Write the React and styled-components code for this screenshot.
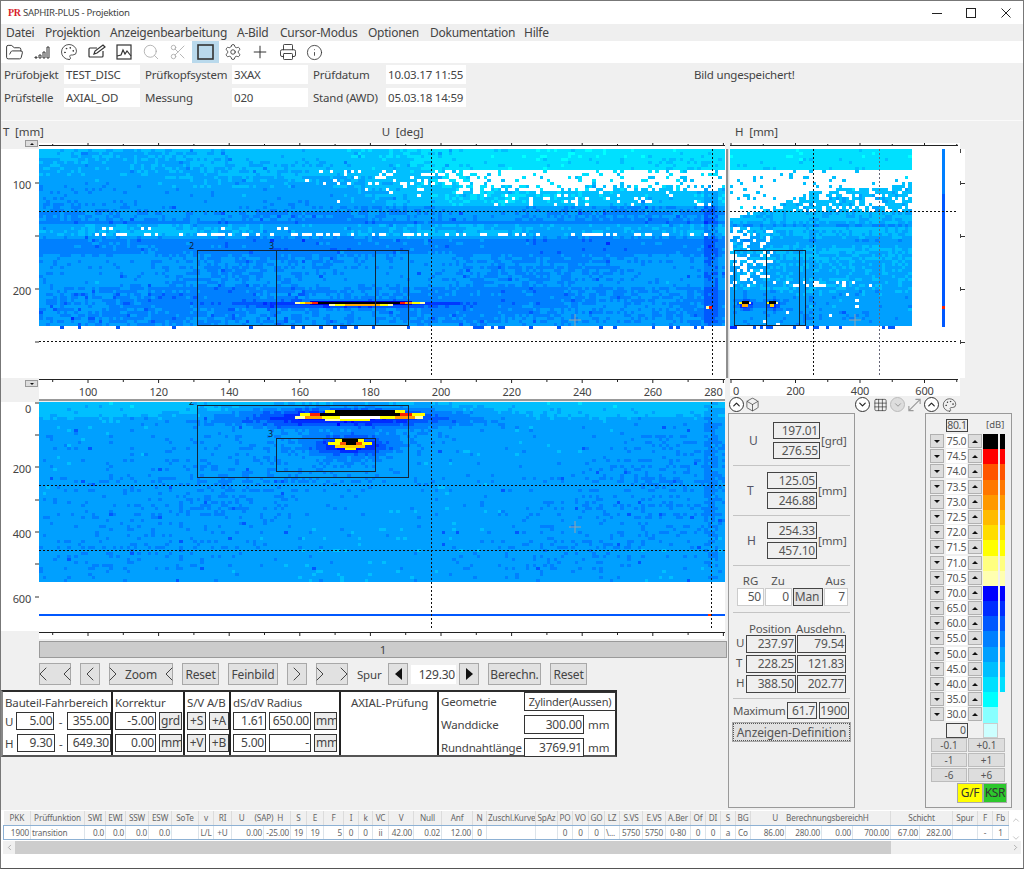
import React from 'react';
import styled, { createGlobalStyle } from 'styled-components';
import { FolderOpen, Palette, Search, Scissors, Settings, Plus, Printer, Info, Box, Grid3x3, ChevronLeft, ChevronRight, ChevronUp, ChevronDown } from 'lucide-react';

/* ---------- heat map data ---------- */
function rng(seed) {
  let a = seed >>> 0;
  return () => {
    a = (a + 0x6d2b79f5) >>> 0;
    let t = a;
    t = Math.imul(t ^ (t >>> 15), t | 1);
    t ^= t + Math.imul(t ^ (t >>> 7), t | 61);
    return ((t ^ (t >>> 14)) >>> 0) / 4294967296;
  };
}
const smooth = (a, b, x) => {
  const t = Math.min(1, Math.max(0, (x - a) / (b - a)));
  return t * t * (3 - 2 * t);
};
const lerpTable = (tbl, y) => {
  for (let i = 1; i < tbl.length; i++) {
    if (y <= tbl[i][0]) {
      const [y0, v0] = tbl[i - 1];
      const [y1, v1] = tbl[i];
      return v0 + ((v1 - v0) * (y - y0)) / (y1 - y0);
    }
  }
  return tbl[tbl.length - 1][1];
};
const colorOf = (v) => {
  if (v < 30) return null;
  if (v < 35) return '#88ffff';
  if (v < 40) return '#00ffff';
  if (v < 45) return '#00e0ff';
  if (v < 50) return '#00bfff';
  if (v < 55) return '#00a0ff';
  if (v < 60) return '#0080ff';
  if (v < 65) return '#0058ff';
  if (v < 70) return '#002cff';
  return '#0000ff';
};
function buildHeat(x0, y0, w, h, cw, ch, fn, seed) {
  const r = rng(seed);
  const paths = {};
  const rows = Math.ceil(h / ch);
  const cols = Math.ceil(w / cw);
  for (let j = 0; j < rows; j++) {
    const y = y0 + j * ch;
    const rowOff = (r() - 0.5) * 1.4;
    let runColor = null;
    let runStart = 0;
    const flush = (endX) => {
      if (runColor) {
        paths[runColor] = (paths[runColor] || '') + `M${runStart} ${y}h${endX - runStart}v${ch}h${runStart - endX}z`;
      }
    };
    for (let i = 0; i <= cols; i++) {
      const x = x0 + Math.round(i * cw);
      let c = null;
      if (i < cols) {
        const n = (r() + r() + r() - 1.5) * 2.4;
        const v = fn(x, y, r);
        c = v === null ? null : colorOf(v + rowOff + n);
      }
      if (c !== runColor) {
        flush(x);
        runColor = c;
        runStart = x;
      }
    }
  }
  return Object.entries(paths);
}

const topBand = [[150,49],[165,50],[185,52],[205,54],[221,55],[223,59],[225,50.5],[236,50.5],[238,57],[254,57],[256,54],[284,54],[287,56],[300,56],[325,54.5]];
const topFn = (x, y, r) => {
  if (y >= 329) return null;
  if (y >= 325) return r() < 0.88 ? null : 63;
  let v = lerpTable(topBand, y);
  const f = smooth(270, 470, x);
  if (y < 205) v -= 7 * f;
  const whiteness = 0.22 * smooth(285, 400, x) + 0.6 * smooth(400, 500, x);
  if (y >= 171 && y < 184 && r() < whiteness) return null;
  if (y >= 184 && y < 192 && r() < whiteness * 0.75) return null;
  if (y >= 192 && y < 205 && r() < whiteness * 0.12) return null;
  if (y >= 228 && y < 231 && x > 95 && x < 300 && r() < 0.14) return null;
  if (y >= 234 && y < 237 && x > 85 && r() < 0.38) return null;
  if (r() < 0.02) v += 6;
  v += Math.sin(x / 47 + y / 30) * 1.0;
  if (x > 702 && x < 716 && y > 175) v += 6;
  const dx = (x - 345) / 100;
  const dy = (y - 304) / 3;
  v += 17 * Math.exp(-dx * dx - dy * dy);
  if (y > 290 && x < 300 && r() < 0.06) v += 6;
  return v;
};
const bottomBand = [[403,48],[415,49.5],[422,52.5],[440,53.5],[500,53.5],[583,52.5]];
const bottomFn = (x, y, r) => {
  if (y >= 583) return null;
  let v = lerpTable(bottomBand, y);
  if (r() < 0.008) v += 7;
  v += Math.sin(x / 70 + y / 45) * 0.8;
  const a = (x - 345) / 105;
  const b = (y - 416) / 9;
  v += 22 * Math.exp(-a * a - b * b);
  const c = (x - 350) / 34;
  const d = (y - 445) / 9;
  v += 20 * Math.exp(-c * c - d * d);
  if (x > 702 && x < 716) v += 2;
  return v;
};
const rightBand = [[150,42.5],[168,43],[172,47],[205,49],[212,49.5],[222,50],[224,56],[228,49],[238,50],[241,55],[245,50],[285,50.5],[300,52],[325,53.5]];
const rightFn = (x, y, r) => {
  if (x >= 910 || y >= 329) return null;
  if (y >= 325) return r() < 0.7 ? null : 63;
  if (y >= 170 && y < 177) return r() < 0.96 ? null : 47;
  const edge = 211 - 28 * smooth(760, 860, x) + 6 * Math.sin(x / 22);
  if (y >= 177 && y < edge) return r() < 0.88 ? null : 47;
  if (y >= edge && y < 212 && r() < 0.3) return null;
  if (y >= 226 && y < 286 && x < 772 && r() < (x < 750 ? 0.45 : 0.22)) return null;
  if (y >= 282 && y < 287 && x > 770 && x < 870 && r() < 0.4) return null;
  if (y > 286 && r() < 0.012) return null;
  let v = lerpTable(rightBand, y);
  if (y > 290 && r() < 0.05) v += 5;
  const a = (x - 744) / 8;
  const b = (y - 304) / 5;
  const c = (x - 771) / 8;
  v += 18 * Math.exp(-a * a - b * b) + 18 * Math.exp(-c * c - b * b);
  return v;
};

const TOP_HEAT = buildHeat(39, 150, 686, 175 + 5, 3.5, 3, topFn, 11);
const BOTTOM_HEAT = buildHeat(39, 403, 686, 180, 3.5, 3, bottomFn, 29);
const RIGHT_HEAT = buildHeat(730, 150, 180, 180, 3.3, 3, rightFn, 47);

const TOP_HOT = [
  [272,303,188,3,'#0038ff'],[310,301.5,102,4.5,'#0000d0'],
  [295,303,5,2,'#ffffaa'],[300,303,5,2,'#ffff00'],[305,303,7,2,'#ff9900'],[312,303,6,2,'#ff2000'],
  [318,303,82,2,'#000000'],[400,303,5,2,'#ff1000'],[405,303,7,2,'#ff9900'],[412,303,8,2,'#ffff00'],[420,303,5,2,'#ffffaa'],
  [329,305,6,2,'#ffffaa'],[335,305,10,2,'#ffff00'],[345,305,35,2,'#ffaa00'],[380,305,8,2,'#ffff00'],[388,305,5,2,'#ffffaa'],
  [706,307,3,3,'#ffffaa'],[709,307,3,3,'#ff1000'],
];
const BOTTOM_HOT = [
  [325,411,10,3,'#ffff00'],[335,411,60,3,'#000000'],[395,411,10,3,'#ffff00'],
  [300,414,10,3,'#ffff00'],[310,414,10,3,'#ff2000'],[320,414,80,3,'#000000'],[400,414,12,3,'#ff2000'],[412,414,13,3,'#ffff00'],
  [295,417,10,3,'#ffffaa'],[305,417,17,3,'#ff9900'],[322,417,18,3,'#ffff00'],[340,417,40,3,'#ffffff'],[380,417,15,3,'#ffff00'],[395,417,20,3,'#ff9900'],[415,417,8,3,'#ffffaa'],
  [325,420,15,2,'#ffffaa'],[340,420,30,2,'#ffff00'],
  [335,440,7,3,'#ffff00'],[342,440,16,3,'#000000'],[358,440,6,3,'#ffff00'],
  [328,443,12,3,'#ffff00'],[340,443,6,3,'#ff5500'],[346,443,10,3,'#000000'],[356,443,6,3,'#ff5500'],[362,443,10,3,'#ffff00'],
  [335,446,30,3,'#ffcc00'],[345,449,11,2,'#ffff00'],
  [708,615,4,2,'#ff3300'],
];
const RIGHT_HOT = [
  [739,302.5,3,2.5,'#ffff00'],[742,302,7,3,'#000000'],[749,302.5,2,2.5,'#ffffaa'],[742,305,6,2.5,'#ffaa00'],
  [766,302.5,3,2.5,'#ffff00'],[769,302,7,3,'#000000'],[776,302.5,2,2.5,'#ffffaa'],[770,305,4,2.5,'#ffcc00'],
];

/* ---------- global ---------- */
const Global = createGlobalStyle`
  html, body { margin: 0; padding: 0; background: #f0f0f0; overflow: hidden; }
  * { box-sizing: border-box; }
  body { font-family: "Noto Sans", "Open Sans", sans-serif; color: #3a3a3a; }
`;
const Window = styled.div`
  width: 1024px; height: 869px; display: flex; flex-direction: column;
  background: #f0f0f0; border: 1px solid #777; border-bottom-color: #555; overflow: hidden;
`;

/* ---------- title / menu / toolbar ---------- */
const TitleBar = styled.div`
  height: 23px; background: #fff; display: flex; align-items: center; padding-left: 7px; flex: none;
`;
const Logo = styled.span`
  font: bold 10px "Liberation Serif", serif; color: #d81e2c; width: 15px; letter-spacing: -0.3px;
`;
const TitleText = styled.span`
  font-size: 9.6px; color: #444; letter-spacing: -0.3px; flex: 1;
`;
const WinButton = styled.span`
  width: 34.5px; height: 23px; display: flex; align-items: center; justify-content: center;
`;
const MenuBar = styled.div`
  height: 17px; flex: none; display: flex; align-items: center; padding-left: 5px; background: #efefef;
`;
const MenuItem = styled.span`
  width: ${(p) => p.$w}px; font-size: 12px; color: #444; white-space: nowrap; letter-spacing: -0.25px;
`;
const Toolbar = styled.div`
  height: 22px; flex: none; display: flex; align-items: center; background: #fff;
`;
const ToolSlot = styled.span`
  width: 27.3px; height: 22px; display: flex; align-items: center; justify-content: center;
  color: ${(p) => (p.$off ? '#a8a8a8' : '#333')};
  background: ${(p) => (p.$on ? '#b9d9ec' : 'transparent')};
`;
const InfoGrid = styled.div`
  height: 58px; flex: none; padding: 2px 0 0 3px; display: grid;
  grid-template-columns: 60px 76px 5px 87px 76px 5px 73px 80px 228px auto;
  grid-auto-rows: 19px; row-gap: 4px; align-items: center;
  border-bottom: 1px solid #fafafa;
`;
const InfoLabel = styled.span`
  font-size: 11.5px; color: #444; white-space: nowrap; letter-spacing: -0.2px;
  grid-column: ${(p) => p.$col};
`;
const InfoValue = styled.span`
  font-size: 11.5px; color: #444; white-space: nowrap; background: #fff; height: 19px; padding-left: 2px;
  line-height: 19px; letter-spacing: -0.2px; grid-column: ${(p) => p.$col};
`;
const InfoNote = styled.span`
  font-size: 11.5px; color: #444; white-space: nowrap; grid-column: 10; letter-spacing: -0.2px;
`;

/* ---------- workspace ---------- */
const Workspace = styled.div`
  height: 689px; flex: none; display: flex;
`;
const LeftCol = styled.div`
  width: 724px; flex: none; display: flex; flex-direction: column;
`;
const RightCol = styled.div`
  width: 298px; flex: none; display: flex; flex-direction: column;
`;
const AxisHead = styled.div`
  height: 19px; flex: none; display: flex; align-items: center; font-size: 11.5px; color: #444;
  white-space: pre; padding: 1px 0 0 ${(p) => p.$pad}px; letter-spacing: -0.1px;
`;
const AxisGap = styled.span`
  width: ${(p) => p.$w}px;
`;
const Row = styled.div`
  display: flex; flex: none; height: ${(p) => p.$h}px;
`;
const Gutter = styled.div`
  width: 38px; flex: none; display: flex; justify-content: flex-end; align-items: flex-start;
  padding: ${(p) => p.$pt || 0}px 1px 0 0;
`;
const MiniButton = styled.span`
  width: 13px; height: 7px; background: #ddd; border: 1px solid #999; display: flex; align-items: center; justify-content: center;
  &::after {
    content: ''; width: 0; height: 0; border-left: 2px solid transparent; border-right: 2px solid transparent;
    ${(p) => (p.$down ? 'border-top: 2px solid #111;' : 'border-bottom: 2px solid #111;')}
  }
`;
const ChartSvg = styled.svg`
  display: block; flex: none; background: ${(p) => p.$bg || '#fff'};
`;
const AxisText = styled.text`
  font-family: "Noto Sans", sans-serif; font-size: 11px; fill: #444; letter-spacing: -0.2px;
`;
const BoxLabel = styled.text`
  font-family: "Noto Sans", sans-serif; font-size: 9px; fill: #123;
`;
const Divider = styled.div`
  height: 2px; margin-left: 38px; flex: none; background: #999; margin-bottom: 1px;
`;
const Splitter = styled.div`
  width: 5px; flex: none; background: linear-gradient(90deg,#fff 0,#fff 1px,#8f8f8f 1px,#8f8f8f 3px,#d0d0d0 3px,#fff 5px);
`;

/* track bar + buttons */
const TrackBar = styled.div`
  height: 17px; width: 688px; margin: 2px 0 0 38px; flex: none; background: #ccc; border: 1px solid #9a9a9a;
  display: flex; align-items: center; justify-content: center; font-size: 11.5px; color: #444;
  position: relative; z-index: 1;
`;
const NavRow = styled.div`
  height: 22px; margin: 5px 0 0 38px; flex: none; display: flex; gap: 9px; align-items: stretch;
`;
const NavButton = styled.button`
  width: ${(p) => p.$w}px; padding: 0; margin: 0; background: #e1e1e1; border: 1px solid #a8a8a8; color: #444;
  font: 12px "Noto Sans", sans-serif; letter-spacing: -0.2px; display: flex; align-items: center; justify-content: center;
  gap: ${(p) => p.$gap || 0}px; flex: none; white-space: nowrap;
  & > svg { flex: none; }
`;
const SpurLabel = styled.span`
  width: 22px; font-size: 11.5px; color: #444; align-self: center; white-space: nowrap; letter-spacing: -0.2px;
`;
const SpinGroup = styled.div`
  display: flex; gap: 3px;
`;
const SpinValue = styled.span`
  width: 45px; height: 19px; margin-top: 2px; background: #fff; font-size: 12px; text-align: right; padding-right: 1px; line-height: 19px; color: #444; letter-spacing: -0.2px;
`;
const Triangle = styled.span`
  width: 0; height: 0; border-top: 6px solid transparent; border-bottom: 6px solid transparent;
  ${(p) => (p.$right ? 'border-left: 7px solid #111;' : 'border-right: 7px solid #111;')}
`;

/* bottom panel */
const ParamPanel = styled.div`
  width: 616px; height: 67px; margin: 5px 0 0 0; flex: none; display: flex; background: #fff;
  border: 2px solid #2c2c2c; border-bottom-color: #555; border-left-color: #888;
`;
const ParamSection = styled.div`
  width: ${(p) => p.$w}px; flex: none; border-right: 2px solid #222; padding-left: 2px; display: flex; flex-direction: column;
  &:last-child { border-right: none; }
`;
const ParamTitle = styled.div`
  height: 20px; font-size: 11.5px; line-height: 22px; color: #444; white-space: nowrap; letter-spacing: -0.15px; padding-left: ${(p) => p.$pad || 0}px;
`;
const ParamRow = styled.div`
  display: flex; align-items: center; height: 18px; margin-bottom: 4px; gap: ${(p) => p.$gap || 3}px;
`;
const RowLetter = styled.span`
  font-size: 11.5px; color: #444; width: 12px;
`;
const Dash = styled.span`
  width: 12px; text-align: center; font-size: 11.5px; color: #444;
`;
const Field = styled.span`
  width: ${(p) => p.$w}px; height: ${(p) => p.$h || 18}px; flex: none; border: 1px solid #333; background: ${(p) => (p.$gray ? '#ececec' : '#fff')};
  font-size: ${(p) => p.$fs || 12}px; line-height: ${(p) => (p.$h || 18) - 2}px; text-align: ${(p) => p.$align || 'right'}; padding: 0 1px; color: #444; white-space: nowrap; overflow: hidden; letter-spacing: -0.2px;
`;
const GeoRow = styled.div`
  display: flex; align-items: center; height: 19px; margin-bottom: 4px;
`;
const GeoLabel = styled.span`
  width: 83px; font-size: 11.5px; color: #444; letter-spacing: -0.2px; white-space: nowrap; flex: none;
`;
const Unit = styled.span`
  font-size: 11.5px; color: #444; margin-left: 4px;
`;

/* right hand */
const RightAxisWrap = styled.div`
  margin-left: 5px; height: 18px; flex: none;
`;
const IconStrip = styled.div`
  height: 17px; margin-left: 4px; flex: none; display: flex; align-items: center; position: relative;
`;
const CircleBtn = styled.span`
  width: 15px; height: 15px; border-radius: 50%; flex: none; border: 1.5px solid ${(p) => (p.$off ? '#bbb' : '#333')};
  background: ${(p) => (p.$off ? '#ddd' : '#fff')}; color: ${(p) => (p.$off ? '#999' : '#222')};
  display: flex; align-items: center; justify-content: center; margin-left: ${(p) => p.$ml || 0}px;
`;
const StripIcon = styled.span`
  width: 15px; height: 15px; display: flex; align-items: center; justify-content: center; flex: none; margin-left: ${(p) => p.$ml || 0}px; color: ${(p) => p.$c || '#333'};
`;
const PanelRow = styled.div`
  display: flex; margin-left: 3px; flex: none; height: 395px;
`;
const SidePanel = styled.div`
  width: ${(p) => p.$w}px; height: 395px; flex: none; border: 1px solid #999; display: flex; flex-direction: column;
  margin-left: ${(p) => p.$ml || 0}px; padding-top: 8px;
`;
const CoordBlock = styled.div`
  display: flex; align-items: center; height: 37px; flex: none; padding-left: ${(p) => p.$pl}px;
`;
const CoordLabel = styled.span`
  width: ${(p) => p.$w}px; font-size: 12px; color: #556; flex: none;
`;
const CoordStack = styled.div`
  display: flex; flex-direction: column; gap: 3px; flex: none;
`;
const ReadBox = styled.span`
  width: ${(p) => p.$w}px; height: ${(p) => p.$h || 17}px; flex: none; border: 1px solid #444; background: #efefef; font-size: 12px; color: #555;
  line-height: ${(p) => (p.$h || 17) - 2}px; text-align: right; padding-right: 1px; letter-spacing: -0.2px; white-space: nowrap;
`;
const CoordUnit = styled.span`
  font-size: 11.5px; color: #555; margin-left: 1px; letter-spacing: -0.1px;
`;
const Sep = styled.div`
  height: 1px; margin: ${(p) => p.$mt ?? 6}px 4px 6px 4px; background: #c4c4c4; flex: none;
`;
const GainHead = styled.div`
  height: 15px; display: flex; font-size: 11.5px; color: #555; padding-left: 8px; flex: none; line-height: 17px;
`;
const GainCell = styled.span`
  width: ${(p) => p.$w}px; text-align: ${(p) => p.$align || 'center'}; flex: none;
`;
const GainRow = styled.div`
  display: flex; height: 18px; padding-left: 8px; gap: 1px; flex: none; margin-top: 1px;
`;
const GainBox = styled.span`
  width: ${(p) => p.$w}px; flex: none; background: ${(p) => (p.$man ? '#e4e4e4' : '#fff')}; border: 1px solid ${(p) => (p.$man ? '#444' : '#ccc')};
  font-size: 12px; line-height: 16px; color: #555; text-align: ${(p) => (p.$man ? 'center' : 'right')}; padding-right: 2px; letter-spacing: -0.2px;
`;
const PosHead = styled.div`
  height: 15px; display: flex; padding-left: 20px; gap: 5px; font-size: 11.5px; color: #555; flex: none; line-height: 19px; letter-spacing: -0.2px; white-space: nowrap; margin-bottom: 1px;
`;
const PosRow = styled.div`
  height: 18px; display: flex; margin-bottom: 2px; gap: 1px; flex: none; padding-left: 7px; align-items: center;
`;
const PosLetter = styled.span`
  width: 9px; font-size: 11.5px; color: #555; flex: none; margin-bottom: 3px;
`;
const MaxRow = styled.div`
  height: 18px; display: flex; align-items: center; padding-left: 4px; flex: none; gap: 2px; margin-top: -4px;
`;
const MaxLabel = styled.span`
  width: 52px; font-size: 11.5px; color: #555; letter-spacing: -0.3px; flex: none; white-space: nowrap;
`;
const DefButton = styled.button`
  margin: 3px 0 0 3px; width: 119px; height: 20px; padding: 0; flex: none; background: #e1e1e1; border: 1px solid #a8a8a8;
  font: 12px "Noto Sans", sans-serif; color: #555; outline: 1px dotted #555; outline-offset: -2px; letter-spacing: -0.1px; white-space: nowrap;
`;

/* dB scale */
const DbHead = styled.div`
  height: 12px; margin: -3px 0 3px 20px; display: flex; flex: none;
`;
const DbMax = styled.span`
  width: 22px; height: 13px; border: 1px solid #444; background: #eee; font-size: 10.5px; line-height: 11px; text-align: center; color: #555; letter-spacing: -0.3px;
`;
const DbUnit = styled.span`
  margin-left: 18px; font-size: 9.5px; color: #555; line-height: 11px;
`;
const LevelRow = styled.div`
  display: flex; height: 15.2px; padding-left: 4px; align-items: stretch; flex: none;
`;
const SpinBtn = styled.span`
  width: 14px; height: 14px; flex: none; background: #ddd; border: 1px solid #b0b0b0; display: flex; align-items: center; justify-content: center;
  &::after {
    content: ''; width: 0; height: 0; border-left: 3.5px solid transparent; border-right: 3.5px solid transparent;
    ${(p) => (p.$up ? 'border-bottom: 3.5px solid #111;' : 'border-top: 3.5px solid #111;')}
  }
`;
const LevelValue = styled.span`
  width: 21px; height: 14px; margin: 0 1px 0 2px; flex: none; background: #fff; font-size: 10.5px; line-height: 14px; text-align: center; color: #555; letter-spacing: -0.3px;
`;
const Swatch = styled.span`
  width: 15px; margin-left: 1px; flex: none; background: ${(p) => p.$c};
`;
const Strip = styled.span`
  width: 5px; margin-left: 2px; flex: none; background: ${(p) => p.$c};
`;
const ZeroRow = styled.div`
  display: flex; margin-left: 20px; height: 15px; flex: none;
`;
const ZeroBox = styled.span`
  width: 22px; height: 15px; border: 1px solid #444; background: #f0f0f0; font-size: 10.5px; line-height: 13px; text-align: right; padding-right: 1px; color: #555;
`;
const ZeroSwatch = styled.span`
  width: 15px; height: 15px; margin-left: 15px; background: #ccffff; border: 1px solid #ccc;
`;
const StepGrid = styled.div`
  display: grid; grid-template-columns: 36px 37px; column-gap: 1px; row-gap: 1px; margin: 0 0 0 5px; flex: none;
`;
const StepButton = styled.span`
  height: 14px; background: #ddd; border: 1px solid #bcbcbc; font-size: 10px; line-height: 12px; text-align: center; color: #555;
`;
const FlagRow = styled.div`
  display: flex; margin: 1px 0 0 31px; flex: none;
`;
const Flag = styled.span`
  width: ${(p) => p.$w}px; height: 20px; background: ${(p) => p.$c}; border: 1px solid #aaa; font-size: 12px; line-height: 18px; text-align: center; color: #333; letter-spacing: -0.3px;
`;

/* table */
const Footer = styled.div`
  flex: 1; background: #fff; position: relative; padding: 1px 0 0 2px; overflow: hidden;
`;
const GridTable = styled.table`
  border-collapse: collapse; table-layout: fixed; width: 1005px; font-size: 8.2px; letter-spacing: -0.15px; color: #666;
`;
const HeadCell = styled.th`
  height: 14px; padding: 0 1px; font-weight: 400; background: #f0f0f0; border-right: 1px solid #dcdcdc; white-space: pre; overflow: hidden; text-align: center; border-bottom: 1px solid #8db1d4;
`;
const BodyCell = styled.td`
  height: 14px; padding: 0 1px; border-right: 1px solid #dde4ea; white-space: nowrap; overflow: hidden; text-align: ${(p) => p.$a}; border-bottom: 1px solid #8db1d4;
  &:first-child { border-left: 1px solid #8db1d4; }
`;
const Scrollbar = styled.div`
  display: flex; height: 13px; width: 1018px; margin-top: 1px; background: #f0f0f0; align-items: center; color: #999;
`;
const ScrollArrow = styled.span`
  width: 12px; flex: none; display: flex; align-items: center; justify-content: center;
`;
const ScrollThumb = styled.span`
  width: 876px; height: 13px; background: #cdcdcd; flex: none;
`;
const ScrollRest = styled.span`
  flex: 1;
`;
const VScroll = styled.div`
  position: absolute; left: 1008px; top: 5px; width: 13px; height: 28px; display: flex; flex-direction: column; justify-content: space-between; align-items: center; color: #bbb;
`;

/* ---------- drawing helpers ---------- */
const Heat = ({ data }) => data.map(([c, d]) => <path key={c} d={d} fill={c} shapeRendering="crispEdges" />);
const Hot = ({ data }) =>
  data.map(([x, y, w, h, f], i) => <rect key={i} x={x} y={y} width={w} height={h} fill={f} shapeRendering="crispEdges" />);
const Dash1 = ({ x1, y1, x2, y2, c = '#111' }) => (
  <line x1={x1} y1={y1} x2={x2} y2={y2} stroke={c} strokeWidth="1" strokeDasharray="2 2" shapeRendering="crispEdges" />
);
const Rect = ({ x, y, w, h }) => (
  <rect x={x} y={y} width={w} height={h} fill="none" stroke="#12263a" strokeWidth="1" shapeRendering="crispEdges" />
);
const Cross = ({ x, y }) => (
  <path d={`M${x - 6} ${y}h12M${x} ${y - 6}v12`} stroke="#9aa3aa" strokeWidth="1" fill="none" />
);

const xU = (v) => 88 + (v - 100) * 3.53 - 39;
const uVals = Array.from({ length: 20 }, (_, i) => 90 + i * 10);
const XRulerTop = () => (
  <ChartSvg width="686" height="9" $bg="transparent">
    <rect x="0" y="3" width="686" height="6" fill="#fff" />
    <path d="M0 5.5H686" stroke="#222" strokeWidth="1" />
    {uVals.map((v) => (
      <line key={v} x1={xU(v)} x2={xU(v)} y1={v % 20 === 0 ? 3 : 4} y2="5" stroke="#222" strokeWidth="1" />
    ))}
  </ChartSvg>
);
const XRulerBottom = () => (
  <ChartSvg width="686" height="21" $bg="#fff">
    <path d="M0 1.5H686" stroke="#222" strokeWidth="1" />
    {uVals.map((v) => (
      <line key={v} x1={xU(v)} x2={xU(v)} y1="1" y2={v % 20 === 0 ? 5 : 4} stroke="#222" strokeWidth="1" />
    ))}
    {uVals.filter((v) => v % 20 === 0).map((v) => (
      <AxisText key={v} x={v === 280 ? xU(v) - 10 : xU(v)} y="18" textAnchor="middle">{v}</AxisText>
    ))}
  </ChartSvg>
);
const YAxis = ({ ticks, labels }) => (
  <ChartSvg width="38" height="229">
    {ticks.map((t) => <line key={t} x1="34" x2="38" y1={t} y2={t} stroke="#333" />)}
    {labels.map(([t, s]) => <AxisText key={s} x="30" y={t + 5.5} textAnchor="end">{s}</AxisText>)}
  </ChartSvg>
);
const TopPlot = () => (
  <ChartSvg width="686" height="229" viewBox="39 150 686 229">
    <Heat data={TOP_HEAT} />
    <Hot data={TOP_HOT} />
    <Cross x={575} y={321} />
    <Dash1 x1={39} y1={212.5} x2={725} y2={212.5} />
    <Dash1 x1={39} y1={342.5} x2={725} y2={342.5} />
    <Dash1 x1={431.5} y1={150} x2={431.5} y2={377} />
    <Dash1 x1={712.5} y1={150} x2={712.5} y2={377} />
    <Rect x={197.5} y={251.5} w={211} h={75} />
    <line x1="276.5" x2="276.5" y1="251" y2="326" stroke="#12263a" />
    <line x1="375.5" x2="375.5" y1="251" y2="326" stroke="#12263a" />
    <BoxLabel x={189} y={250}>2</BoxLabel>
    <BoxLabel x={269} y={250}>3</BoxLabel>
  </ChartSvg>
);
const BottomPlot = () => (
  <ChartSvg width="686" height="229" viewBox="39 403 686 229">
    <Heat data={BOTTOM_HEAT} />
    <rect x="39" y="615" width="686" height="2" fill="#0058ff" shapeRendering="crispEdges" />
    <Hot data={BOTTOM_HOT} />
    <Cross x={575} y={528} />
    <Dash1 x1={39} y1={486.5} x2={725} y2={486.5} />
    <Dash1 x1={39} y1={551.5} x2={725} y2={551.5} />
    <Dash1 x1={431.5} y1={403} x2={431.5} y2={630} />
    <Dash1 x1={711.5} y1={403} x2={711.5} y2={630} />
    <Rect x={197.5} y={406.5} w={211} h={72} />
    <Rect x={276.5} y={439.5} w={99} h={33} />
    <BoxLabel x={189} y={406}>2</BoxLabel>
    <BoxLabel x={268} y={438}>3</BoxLabel>
  </ChartSvg>
);
const RightPlot = () => (
  <ChartSvg width="235" height="229" viewBox="730 150 235 229">
    <Heat data={RIGHT_HEAT} />
    <Hot data={RIGHT_HOT} />
    <rect x="942" y="150" width="3" height="178" fill="#0080ff" shapeRendering="crispEdges" />
    <rect x="942" y="195" width="3" height="133" fill="#0058ff" shapeRendering="crispEdges" />
    <rect x="942" y="307" width="3" height="3" fill="#ff2000" shapeRendering="crispEdges" />
    <Cross x={855} y={321} />
    <Dash1 x1={730} y1={212.5} x2={957} y2={212.5} />
    <Dash1 x1={730} y1={342.5} x2={957} y2={342.5} />
    <Dash1 x1={813.5} y1={150} x2={813.5} y2={377} />
    <Dash1 x1={879.5} y1={150} x2={879.5} y2={377} c="#667" />
    <Rect x={734.5} y={251.5} w={71} h={75} />
    <line x1="766.5" x2="766.5" y1="251" y2="326" stroke="#12263a" />
    <line x1="799.5" x2="799.5" y1="251" y2="326" stroke="#12263a" />
    {[184, 237, 290, 343].map((t) => <line key={t} x1="960" x2="965" y1={t + 0.5} y2={t + 0.5} stroke="#333" />)}
    <path d="M960.5 150V154M960.5 182V186M960.5 235V239M960.5 288V292M960.5 341V345" stroke="#444" />
  </ChartSvg>
);
const xH = (v) => 731 + v * 0.3225 - 730;
const hVals = [0, 100, 200, 300, 400, 500, 600, 700];
const RightRulerTop = () => (
  <ChartSvg width="230" height="9" $bg="transparent">
    <rect x="0" y="3" width="230" height="6" fill="#fff" />
    <path d="M0 5.5H228" stroke="#222" />
    {hVals.map((v) => <line key={v} x1={xH(v)} x2={xH(v)} y1={v % 200 === 0 ? 3 : 4} y2="5" stroke="#222" />)}
  </ChartSvg>
);
const RightRulerBottom = () => (
  <ChartSvg width="230" height="18" $bg="#fff">
    <path d="M0 1.5H228" stroke="#222" />
    {hVals.map((v) => <line key={v} x1={xH(v)} x2={xH(v)} y1="1" y2={v % 200 === 0 ? 5 : 4} stroke="#222" />)}
    {[0, 200, 400, 600].map((v) => (
      <AxisText key={v} x={v === 0 ? 3 : xH(v)} y="16.5" textAnchor={v === 0 ? 'start' : 'middle'}>{v}</AxisText>
    ))}
  </ChartSvg>
);

/* ---------- toolbar art ---------- */
const Bars = () => (
  <svg width="18" height="16" viewBox="0 0 18 16"><path d="M2 14v-1h2v1zM6 14v-3h2v3zM10 14V8h2v6zM14 14V3h2v11z" fill="none" stroke="#333" strokeWidth="1" /></svg>
);
const Note = () => (
  <svg width="20" height="18" viewBox="0 0 20 18" fill="none" stroke="#333" strokeWidth="1.2">
    <path d="M2 13V6q0-1 1-1h7M16 8v5q0 1-1 1H3q-1 0-1-1" /><path d="M7 11l1-3 8-6 2 2-8 6z" />
  </svg>
);
const Plot = () => (
  <svg width="18" height="18" viewBox="0 0 18 18" fill="none" stroke="#333" strokeWidth="1.2">
    <rect x="2" y="2" width="14" height="14" /><path d="M2 13l4-1 2-5 2 4 2-3 4 5" />
  </svg>
);
const Expand = () => (
  <svg width="16" height="16" viewBox="0 0 16 16" fill="none" stroke="#999" strokeWidth="1.2">
    <path d="M2 14L14 2M9 2h5v5M2 9v5h5" />
  </svg>
);
const WinMin = () => <svg width="10" height="10"><path d="M0 5.5h10" stroke="#222" /></svg>;
const WinMax = () => <svg width="10" height="10"><rect x=".5" y=".5" width="9" height="9" fill="none" stroke="#222" /></svg>;
const WinClose = () => <svg width="10" height="10"><path d="M.5 .5l9 9M9.5 .5l-9 9" stroke="#222" /></svg>;

/* ---------- data ---------- */
const MENU = [['Datei', 39], ['Projektion', 65], ['Anzeigenbearbeitung', 127], ['A-Bild', 43], ['Cursor-Modus', 88], ['Optionen', 62], ['Dokumentation', 94], ['Hilfe', 40]];
const LEVELS = [
  ['75.0', '#000000'], ['74.5', '#ff0000'], ['74.0', '#ff5500'], ['73.5', '#ff7700'], ['73.0', '#ff9900'],
  ['72.5', '#ffbb00'], ['72.0', '#ffdd00'], ['71.5', '#ffff00'], ['71.0', '#ffff80'], ['70.5', '#ffffb0'],
  ['70.0', '#0000ff'], ['65.0', '#002cff'], ['60.0', '#0058ff'], ['55.0', '#0080ff'], ['50.0', '#00a0ff'],
  ['45.0', '#00bfff'], ['40.0', '#00e0ff'], ['35.0', '#00ffff'], ['30.0', '#88ffff'],
];
const bounds = [3,30,84,105,125,148,171,198,213,231,263,290,306,323,343,358,372,388,413,441,472,486,535,557,572,588,604,619,642,665,690,705,720,735,750,785,821,852,890,919,952,977,992,1008];
const HEAD = [
  ['PKK'],['Prüffunktion'],['SWI'],['EWI'],['SSW'],['ESW'],['SoTe'],['v'],['RI'],['U     (SAP)  H',2],['S'],['E'],['F'],['I'],['k'],['VC'],['V'],['Null'],['Anf'],['N'],['Zuschl.Kurve'],['SpAz'],['PO'],['VO'],['GO'],['LZ'],['S.VS'],['E.VS'],['A.Ber'],['Of'],['DI'],['S'],['BG'],['U    BerechnungsbereichH',4],['Schicht',2],['Spur'],['F'],['Fb'],
];
const BODY = [
  ['1900','r'],['transition','l'],['0.0','r'],['0.0','r'],['0.0','r'],['0.0','r'],['','c'],['L/L','c'],['+U','c'],['0.00','r'],['-25.00','r'],['19','c'],['19','c'],['5','r'],['0','c'],['0','c'],['ii','c'],['42.00','r'],['0.02','r'],['12.00','r'],['0','c'],['','c'],['','c'],['0','c'],['0','c'],['0','c'],['\\...','l'],['5750','c'],['5750','c'],['0-80','c'],['0','c'],['0','c'],['a','c'],['Co','c'],['86.00','r'],['280.00','r'],['0.00','r'],['700.00','r'],['67.00','r'],['282.00','r'],['','c'],['-','c'],['1','c'],
];
const ALIGN = { r: 'right', l: 'left', c: 'center' };
const Chev = ({ d }) => (d === 'l' ? <ChevronLeft size={24} strokeWidth={1} /> : <ChevronRight size={24} strokeWidth={1} />);

export default function App() {
  return (
    <Window>
      <Global />
      <TitleBar>
        <Logo>PR</Logo>
        <TitleText>SAPHIR-PLUS - Projektion</TitleText>
        <WinButton><WinMin /></WinButton>
        <WinButton><WinMax /></WinButton>
        <WinButton><WinClose /></WinButton>
      </TitleBar>
      <MenuBar>
        {MENU.map(([m, w]) => <MenuItem key={m} $w={w}>{m}</MenuItem>)}
      </MenuBar>
      <Toolbar>
        <ToolSlot><FolderOpen size={19} strokeWidth={1.2} /></ToolSlot>
        <ToolSlot><Bars /></ToolSlot>
        <ToolSlot><Palette size={18} strokeWidth={1.1} /></ToolSlot>
        <ToolSlot><Note /></ToolSlot>
        <ToolSlot><Plot /></ToolSlot>
        <ToolSlot $off><Search size={18} strokeWidth={1.1} /></ToolSlot>
        <ToolSlot $off><Scissors size={18} strokeWidth={1.1} /></ToolSlot>
        <ToolSlot $on><svg width="17" height="16"><rect x="1" y="1" width="15" height="14" fill="none" stroke="#333" strokeWidth="1.6" /></svg></ToolSlot>
        <ToolSlot><Settings size={18} strokeWidth={1.1} /></ToolSlot>
        <ToolSlot><Plus size={20} strokeWidth={1.2} /></ToolSlot>
        <ToolSlot><Printer size={18} strokeWidth={1.2} /></ToolSlot>
        <ToolSlot><Info size={17} strokeWidth={1.2} /></ToolSlot>
      </Toolbar>
      <InfoGrid>
        <InfoLabel $col={1}>Prüfobjekt</InfoLabel><InfoValue $col={2}>TEST_DISC</InfoValue>
        <InfoLabel $col={4}>Prüfkopfsystem</InfoLabel><InfoValue $col={5}>3XAX</InfoValue>
        <InfoLabel $col={7}>Prüfdatum</InfoLabel><InfoValue $col={8}>10.03.17 11:55</InfoValue>
        <InfoNote>Bild ungespeichert!</InfoNote>
        <InfoLabel $col={1}>Prüfstelle</InfoLabel><InfoValue $col={2}>AXIAL_OD</InfoValue>
        <InfoLabel $col={4}>Messung</InfoLabel><InfoValue $col={5}>020</InfoValue>
        <InfoLabel $col={7}>Stand (AWD)</InfoLabel><InfoValue $col={8}>05.03.18 14:59</InfoValue>
      </InfoGrid>
      <Workspace>
        <LeftCol>
          <AxisHead $pad={2}>T  [mm]<AxisGap $w={338} />U  [deg]</AxisHead>
          <Row $h={9}>
            <Gutter><MiniButton /></Gutter>
            <XRulerTop />
          </Row>
          <Row $h={229}>
            <YAxis ticks={[34, 87, 140, 193]} labels={[[34, '100'], [140, '200']]} />
            <TopPlot />
          </Row>
          <Row $h={21}>
            <Gutter $pt={2}><MiniButton $down /></Gutter>
            <XRulerBottom />
          </Row>
          <Divider />
          <Row $h={229}>
            <YAxis ticks={[1, 33, 65, 98, 130, 162, 195]} labels={[[5, '0'], [65, '200'], [130, '400'], [195, '600']]} />
            <BottomPlot />
          </Row>
          <Row $h={8}>
            <Gutter />
            <ChartSvg width="686" height="8">
              <path d="M0 1.5H686" stroke="#222" />
              {uVals.map((v) => <line key={v} x1={xU(v)} x2={xU(v)} y1="1" y2={v % 20 === 0 ? 5 : 4} stroke="#222" />)}
            </ChartSvg>
          </Row>
          <TrackBar>1</TrackBar>
          <NavRow>
            <NavButton $w={32} $gap={-12}><Chev d="l" /><Chev d="l" /></NavButton>
            <NavButton $w={20}><Chev d="l" /></NavButton>
            <NavButton $w={64} $gap={-2}><Chev d="r" />Zoom<Chev d="l" /></NavButton>
            <NavButton $w={37}>Reset</NavButton>
            <NavButton $w={50}>Feinbild</NavButton>
            <NavButton $w={20}><Chev d="r" /></NavButton>
            <NavButton $w={32} $gap={-12}><Chev d="r" /><Chev d="r" /></NavButton>
            <SpurLabel>Spur</SpurLabel>
            <SpinGroup>
              <NavButton $w={20}><Triangle /></NavButton>
              <SpinValue>129.30</SpinValue>
              <NavButton $w={20}><Triangle $right /></NavButton>
            </SpinGroup>
            <NavButton $w={53}>Berechn.</NavButton>
            <NavButton $w={37}>Reset</NavButton>
          </NavRow>
          <ParamPanel>
            <ParamSection $w={110}>
              <ParamTitle>Bauteil-Fahrbereich</ParamTitle>
              <ParamRow $gap={0}><RowLetter>U</RowLetter><Field $w={38}>5.00</Field><Dash>-</Dash><Field $w={44}>355.00</Field></ParamRow>
              <ParamRow $gap={0}><RowLetter>H</RowLetter><Field $w={38}>9.30</Field><Dash>-</Dash><Field $w={44}>649.30</Field></ParamRow>
            </ParamSection>
            <ParamSection $w={72}>
              <ParamTitle>Korrektur</ParamTitle>
              <ParamRow><Field $w={41}>-5.00</Field><Field $w={23} $gray $align="center">grd</Field></ParamRow>
              <ParamRow><Field $w={41}>0.00</Field><Field $w={23} $gray $align="center">mm</Field></ParamRow>
            </ParamSection>
            <ParamSection $w={46}>
              <ParamTitle>S/V A/B</ParamTitle>
              <ParamRow><Field $w={19} $gray $align="center">+S</Field><Field $w={20} $gray $align="center">+A</Field></ParamRow>
              <ParamRow><Field $w={19} $gray $align="center">+V</Field><Field $w={20} $gray $align="center">+B</Field></ParamRow>
            </ParamSection>
            <ParamSection $w={110}>
              <ParamTitle>dS/dV Radius</ParamTitle>
              <ParamRow><Field $w={33}>1.61</Field><Field $w={42}>650.00</Field><Field $w={23} $gray $align="center">mm</Field></ParamRow>
              <ParamRow><Field $w={33}>5.00</Field><Field $w={42}>-</Field><Field $w={23} $gray $align="center">mm</Field></ParamRow>
            </ParamSection>
            <ParamSection $w={98}>
              <ParamTitle $pad={8}>AXIAL-Prüfung</ParamTitle>
            </ParamSection>
            <ParamSection $w={178}>
              <GeoRow><GeoLabel>Geometrie</GeoLabel><Field $w={92} $h={19} $fs={11} $align="center">Zylinder(Aussen)</Field></GeoRow>
              <GeoRow><GeoLabel>Wanddicke</GeoLabel><Field $w={60} $h={19}>300.00</Field><Unit>mm</Unit></GeoRow>
              <GeoRow><GeoLabel>Rundnahtlänge</GeoLabel><Field $w={60} $h={19}>3769.91</Field><Unit>mm</Unit></GeoRow>
            </ParamSection>
          </ParamPanel>
        </LeftCol>
        <RightCol>
          <AxisHead $pad={10}>H  [mm]</AxisHead>
          <Row $h={9}>
            <AxisGap $w={5} />
            <RightRulerTop />
          </Row>
          <Row $h={229}>
            <Splitter />
            <RightPlot />
          </Row>
          <RightAxisWrap><RightRulerBottom /></RightAxisWrap>
          <IconStrip>
            <CircleBtn><ChevronUp size={11} strokeWidth={2.6} /></CircleBtn>
            <StripIcon $ml={1}><Box size={15} strokeWidth={1.1} /></StripIcon>
            <CircleBtn $ml={95}><ChevronDown size={11} strokeWidth={2.6} /></CircleBtn>
            <StripIcon $ml={3}><Grid3x3 size={16} strokeWidth={1.1} /></StripIcon>
            <CircleBtn $off $ml={2}><ChevronDown size={10} strokeWidth={2.4} /></CircleBtn>
            <StripIcon $ml={2}><Expand /></StripIcon>
            <CircleBtn $ml={2}><ChevronUp size={11} strokeWidth={2.6} /></CircleBtn>
            <StripIcon $ml={3}><Palette size={16} strokeWidth={1.1} /></StripIcon>
          </IconStrip>
          <PanelRow>
            <SidePanel $w={127}>
              <CoordBlock $pl={20}>
                <CoordLabel $w={24}>U</CoordLabel>
                <CoordStack><ReadBox $w={47}>197.01</ReadBox><ReadBox $w={47}>276.55</ReadBox></CoordStack>
                <CoordUnit>[grd]</CoordUnit>
              </CoordBlock>
              <Sep />
              <CoordBlock $pl={18}>
                <CoordLabel $w={20}>T</CoordLabel>
                <CoordStack><ReadBox $w={50}>125.05</ReadBox><ReadBox $w={50}>246.88</ReadBox></CoordStack>
                <CoordUnit>[mm]</CoordUnit>
              </CoordBlock>
              <Sep />
              <CoordBlock $pl={18}>
                <CoordLabel $w={20}>H</CoordLabel>
                <CoordStack><ReadBox $w={50}>254.33</ReadBox><ReadBox $w={50}>457.10</ReadBox></CoordStack>
                <CoordUnit>[mm]</CoordUnit>
              </CoordBlock>
              <Sep />
              <GainHead>
                <GainCell $w={27}>RG</GainCell>
                <GainCell $w={28}>Zu</GainCell>
                <GainCell $w={31} />
                <GainCell $w={25}>Aus</GainCell>
              </GainHead>
              <GainRow>
                <GainBox $w={27}>50</GainBox>
                <GainBox $w={27}>0</GainBox>
                <GainBox $w={30} $man>Man</GainBox>
                <GainBox $w={24}>7</GainBox>
              </GainRow>
              <Sep />
              <PosHead><span>Position</span><span>Ausdehn.</span></PosHead>
              {[['U', '237.97', '79.54'], ['T', '228.25', '121.83'], ['H', '388.50', '202.77']].map(([l, a, b]) => (
                <PosRow key={l}>
                  <PosLetter>{l}</PosLetter>
                  <ReadBox $w={50} $h={18}>{a}</ReadBox>
                  <ReadBox $w={49} $h={18}>{b}</ReadBox>
                </PosRow>
              ))}
              <Sep $mt={3} />
              <MaxRow>
                <MaxLabel>Maximum</MaxLabel>
                <ReadBox $w={30} $h={17}>61.7</ReadBox>
                <ReadBox $w={30} $h={17}>1900</ReadBox>
              </MaxRow>
              <DefButton>Anzeigen-Definition</DefButton>
            </SidePanel>
            <SidePanel $w={87} $ml={70}>
              <DbHead><DbMax>80.1</DbMax><DbUnit>[dB]</DbUnit></DbHead>
              {LEVELS.map(([v, c], i) => (
                <LevelRow key={v}>
                  <SpinBtn />
                  <LevelValue>{v}</LevelValue>
                  <SpinBtn $up />
                  <Swatch $c={c} />
                  {i <= 16 ? <Strip $c={c} /> : null}
                </LevelRow>
              ))}
              <ZeroRow><ZeroBox>0</ZeroBox><ZeroSwatch /></ZeroRow>
              <StepGrid>
                {['-0.1', '+0.1', '-1', '+1', '-6', '+6'].map((s) => <StepButton key={s}>{s}</StepButton>)}
              </StepGrid>
              <FlagRow>
                <Flag $w={26} $c="#ffff00">G/F</Flag>
                <Flag $w={24} $c="#2dc82d">KSR</Flag>
              </FlagRow>
            </SidePanel>
          </PanelRow>
        </RightCol>
      </Workspace>
      <Footer>
        <GridTable>
          <colgroup>
            {bounds.slice(1).map((b, i) => <col key={i} width={b - bounds[i]} />)}
          </colgroup>
          <thead>
            <tr>{HEAD.map(([t, s], i) => <HeadCell key={i} colSpan={s || 1}>{t}</HeadCell>)}</tr>
          </thead>
          <tbody>
            <tr>{BODY.map(([t, a], i) => <BodyCell key={i} $a={ALIGN[a]}>{t}</BodyCell>)}</tr>
          </tbody>
        </GridTable>
        <VScroll><ChevronUp size={10} /><ChevronDown size={10} /></VScroll>
        <Scrollbar>
          <ScrollArrow><ChevronLeft size={9} /></ScrollArrow>
          <ScrollThumb />
          <ScrollRest />
          <ScrollArrow><ChevronRight size={9} /></ScrollArrow>
        </Scrollbar>
      </Footer>
    </Window>
  );
}
